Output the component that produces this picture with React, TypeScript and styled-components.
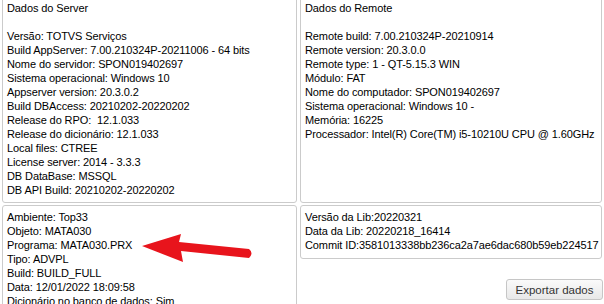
import React from "react";
import styled, { createGlobalStyle } from "styled-components";

const Global = createGlobalStyle`
  html, body { margin: 0; padding: 0; background: #ffffff; overflow: hidden; }
  body { font-family: "Liberation Sans", Arial, sans-serif; font-size: 11px; color: #000; }
`;

const Page = styled.div`
  width: 604px;
  height: 304px;
  overflow: hidden;
  box-sizing: border-box;
  padding: 0 2px;
`;

const Grid = styled.div`
  margin-top: -3px;
  display: grid;
  grid-template-columns: 295px 302px;
  column-gap: 3px;
  row-gap: 2px;
`;

const Panel = styled.div<{ $pt?: number; $pb?: number; $h?: number }>`
  position: relative;
  box-sizing: border-box;
  border: 1px solid #cbcbcb;
  border-radius: 3px;
  padding: ${(p) => p.$pt ?? 4}px 4px ${(p) => p.$pb ?? 6}px 4px;
  ${(p) => (p.$h ? `height: ${p.$h}px;` : "")}
  background: #fff;
`;

const Line = styled.div`
  font-family: "Liberation Sans", Arial, sans-serif;
  font-size: 11px;
  letter-spacing: -0.1px;
  line-height: 14px;
  height: 14px;
  white-space: pre;
  color: #000;
`;

const Column = styled.div`
  display: flex;
  flex-direction: column;
  align-items: stretch;
`;

const ButtonRow = styled.div`
  display: flex;
  justify-content: flex-end;
  margin-top: 20px;
  margin-right: -1px;
`;

const Button = styled.button`
  box-sizing: border-box;
  width: 97px;
  height: 21px;
  padding: 0;
  border: 1px solid #c6c6c6;
  border-radius: 3px;
  background: linear-gradient(#fafafa, #e8e8e8);
  font-family: "Liberation Sans", Arial, sans-serif;
  font-size: 11.5px;
  color: #333;
  cursor: pointer;
`;

const Arrow = styled.svg`
  position: absolute;
  left: 0;
  top: 0;
  pointer-events: none;
  overflow: visible;
`;

const serverLines = [
  "Dados do Server",
  "",
  "Versão: TOTVS Serviços",
  "Build AppServer: 7.00.210324P-20211006 - 64 bits",
  "Nome do servidor: SPON019402697",
  "Sistema operacional: Windows 10",
  "Appserver version: 20.3.0.2",
  "Build DBAccess: 20210202-20220202",
  "Release do RPO:  12.1.033",
  "Release do dicionário: 12.1.033",
  "Local files: CTREE",
  "License server: 2014 - 3.3.3",
  "DB DataBase: MSSQL",
  "DB API Build: 20210202-20220202",
];

const remoteLines = [
  "Dados do Remote",
  "",
  "Remote build: 7.00.210324P-20210914",
  "Remote version: 20.3.0.0",
  "Remote type: 1 - QT-5.15.3 WIN",
  "Módulo: FAT",
  "Nome do computador: SPON019402697",
  "Sistema operacional: Windows 10 -",
  "Memória: 16225",
  "Processador: Intel(R) Core(TM) i5-10210U CPU @ 1.60GHz",
];

const envLines = [
  "Ambiente: Top33",
  "Objeto: MATA030",
  "Programa: MATA030.PRX",
  "Tipo: ADVPL",
  "Build: BUILD_FULL",
  "Data: 12/01/2022 18:09:58",
  "Dicionário no banco de dados: Sim",
];

const libLines = [
  "Versão da Lib:20220321",
  "Data da Lib: 20220218_16414",
  "Commit ID:3581013338bb236ca2a7ae6dac680b59eb224517",
];

export default function App() {
  return (
    <>
      <Global />
      <Page>
        <Grid>
          <Panel $pt={3} $h={206}>
            {serverLines.map((l, i) => (
              <Line key={i}>{l}</Line>
            ))}
          </Panel>
          <Panel $pt={3} $h={206}>
            {remoteLines.map((l, i) => (
              <Line key={i}>{l}</Line>
            ))}
          </Panel>
          <Panel $pt={4} $pb={10}>
            {envLines.map((l, i) => (
              <Line key={i}>{l}</Line>
            ))}
            <Arrow width="1" height="1" viewBox="0 0 1 1">
              <path
                d="M139,40 L178,28 L176,36 L246,43 Q251,47 246,52 L178,45 L180,56 Z"
                fill="#e8141c"
              />
            </Arrow>
          </Panel>
          <Column>
            <Panel $pt={4} $pb={6}>
              {libLines.map((l, i) => (
                <Line key={i}>{l}</Line>
              ))}
            </Panel>
            <ButtonRow>
              <Button>Exportar dados</Button>
            </ButtonRow>
          </Column>
        </Grid>
      </Page>
    </>
  );
}
